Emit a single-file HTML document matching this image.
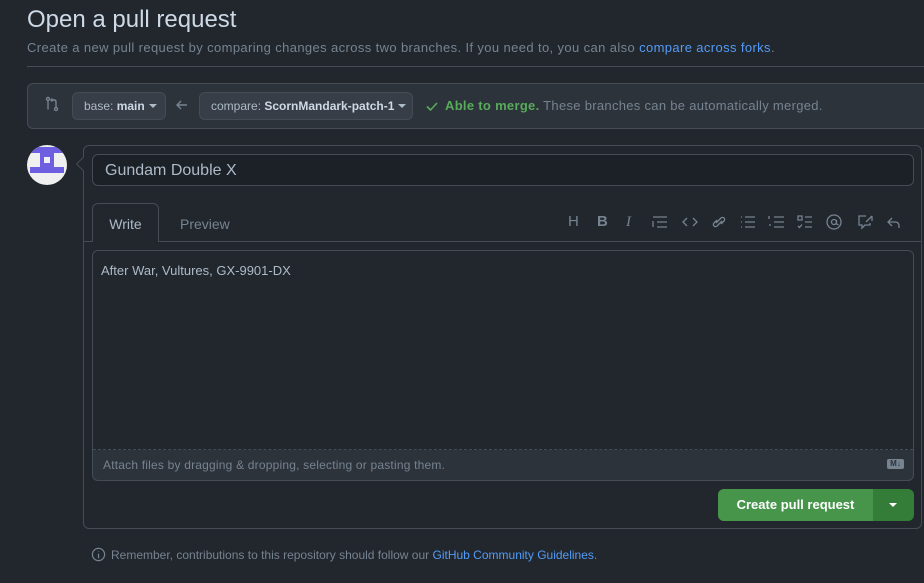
<!DOCTYPE html>
<html><head><style>
*{box-sizing:border-box;margin:0;padding:0}
body{width:924px;height:583px;overflow:hidden;background:#22272e;font-family:"Liberation Sans",sans-serif;color:#adbac7;position:relative}
.a{position:absolute}
.btn{position:absolute;border:1px solid #444c56;background:#373e47;border-radius:6px;font-size:12px;color:#adbac7;display:flex;align-items:center;padding-left:11px}
.btn b{color:#cdd9e5}
.caret{display:inline-block;width:0;height:0;border-left:4px solid transparent;border-right:4px solid transparent;border-top:4px solid #adbac7;margin-left:4px}
svg{position:absolute}
</style></head><body>
<div class="a" style="left:27px;top:6px;font-size:24px;color:#cdd9e5">Open a pull request</div>
<div class="a" style="left:27px;top:40px;font-size:13px;color:#768390;letter-spacing:0.38px">Create a new pull request by comparing changes across two branches. If you need to, you can also <span style="color:#539bf5">compare across forks</span>.</div>
<div class="a" style="left:27px;top:66px;width:897px;height:1px;background:#444c56"></div>
<div class="a" style="left:27px;top:83px;width:910px;height:46px;background:#2d333b;border:1px solid #444c56;border-radius:6px"></div>
<svg style="left:44px;top:96px" width="16" height="16" viewBox="0 0 16 16" fill="none" stroke="#768390" stroke-width="1.4"><circle cx="4" cy="3" r="1.5"/><path d="M4 4.5v9"/><circle cx="12" cy="13" r="1.5"/><path d="M12 11.5V6q0-2-2-2H7M8.5 2.5 7 4l1.5 1.5"/></svg>
<div class="btn" style="left:72px;top:92px;width:94px;height:28px">base:&nbsp;<b>main</b><span class="caret"></span></div>
<svg style="left:175px;top:98px" width="14" height="14" viewBox="0 0 14 14" fill="none" stroke="#768390" stroke-width="1.4"><path d="M12 7H2M6 3 2 7l4 4"/></svg>
<div class="btn" style="left:199px;top:92px;width:214px;height:28px">compare:&nbsp;<b>ScornMandark-patch-1</b><span class="caret"></span></div>
<svg style="left:425px;top:99px" width="14" height="14" viewBox="0 0 14 14" fill="none" stroke="#57ab5a" stroke-width="1.6"><path d="M2 7.5 5.5 11 12 4"/></svg>
<div class="a" style="left:445px;top:98px;font-size:13px;color:#768390;letter-spacing:0.3px"><b style="color:#57ab5a">Able to merge.</b> These branches can be automatically merged.</div>
<div class="a" style="left:27px;top:145px;width:40px;height:40px;border-radius:50%;background:#f0f0f0;overflow:hidden">
<div class="a" style="left:3px;top:2px;width:34px;height:6px;background:#6e5ee0"></div>
<div class="a" style="left:13px;top:8px;width:14px;height:14px;background:#6e5ee0"></div>
<div class="a" style="left:17px;top:12px;width:6px;height:6px;background:#f0f0f0"></div>
<div class="a" style="left:3px;top:22px;width:34px;height:6px;background:#6e5ee0"></div>
</div>
<div class="a" style="left:83px;top:145px;width:839px;height:384px;border:1px solid #444c56;border-radius:6px"></div>
<div class="a" style="left:78px;top:159px;width:10px;height:10px;background:#22272e;border-left:1px solid #444c56;border-bottom:1px solid #444c56;transform:rotate(45deg)"></div>
<div class="a" style="left:92px;top:154px;width:822px;height:32px;background:#1c2128;border:1px solid #444c56;border-radius:6px;font-size:16px;color:#adbac7;padding:7px 12px">Gundam Double X</div>
<div class="a" style="left:84px;top:241px;width:837px;height:1px;background:#444c56"></div>
<div class="a" style="left:92px;top:203px;width:67px;height:39px;border:1px solid #444c56;border-bottom:none;border-radius:6px 6px 0 0;background:#22272e;font-size:14px;color:#adbac7;text-align:center;padding-top:12px">Write</div>
<div class="a" style="left:180px;top:216px;font-size:14px;color:#768390">Preview</div>
<div class="a" style="left:566px;top:214px;font-size:15px;color:#768390;line-height:16px">
<span class="a" style="left:2px">H</span><span class="a" style="left:31px;font-weight:bold">B</span><span class="a" style="left:60px;font-style:italic;font-family:'Liberation Serif'">I</span></div>
<svg style="left:652px;top:214px" width="270" height="16" viewBox="0 0 270 16" fill="none" stroke="#768390" stroke-width="1.3">
<path d="M1 3h14M5 8h10M5 13h10M1 7v6"/>
<path d="M35 4 31 8l4 4M41 4l4 4-4 4"/>
<path d="M64 9l5-5a2 2 0 0 1 3 3l-3 3M70 7l-5 5a2 2 0 0 1-3-3l3-3"/>
<path d="M89 3h1M89 8h1M89 13h1M93 3h10M93 8h10M93 13h10"/>
<path d="M122 3h10M122 8h10M122 13h10M117 2v3M117 11h2"/>
<path d="M146 2h4v4h-4zM153 3h7M153 8h7M153 13h7M146 12l1.5 1.5 2.5-3"/>
<circle cx="182" cy="8" r="7"/><circle cx="182" cy="8" r="2.5"/><path d="M184.5 6v3q0 2 2 1.5"/>
<path d="M208 2h6M220 2l-6 6M220 2v5M212 2h-5v9h3v3l3-3h5V9"/>
<path d="M240 4l-4 4 4 4M236 8h7q4 0 4 4v2"/>
</svg>
<div class="a" style="left:92px;top:250px;width:822px;height:231px;border:1px solid #444c56;border-radius:6px;background:#2d333b;overflow:hidden">
<div style="height:199px;background:#22272e;border-bottom:1px dashed #444c56;padding:12px 8px;font-size:13px;color:#adbac7">After War, Vultures, GX-9901-DX</div>
<div style="font-size:12px;color:#768390;padding:8px 10px;letter-spacing:0.2px">Attach files by dragging &amp; dropping, selecting or pasting them.</div>
<div class="a" style="left:794px;top:208px;width:17px;height:10px;background:#768390;border-radius:2px;font-size:8px;color:#2d333b;font-weight:bold;text-align:center;line-height:10px">M↓</div>
</div>
<div class="a" style="left:718px;top:489px;width:196px;height:32px;border-radius:6px;background:#347d39;overflow:hidden">
<div style="position:absolute;left:0;top:0;width:155px;height:32px;background:#46954a;color:#fff;font-weight:bold;font-size:13px;text-align:center;line-height:32px">Create pull request</div>
<div style="position:absolute;left:171px;top:14px;border-left:4px solid transparent;border-right:4px solid transparent;border-top:4px solid #fff"></div>
</div>
<svg style="left:91px;top:547px" width="15" height="15" viewBox="0 0 16 16" fill="none" stroke="#768390" stroke-width="1.3"><circle cx="8" cy="8" r="6.5"/><path d="M8 7v5M8 4.5v.5"/></svg>
<div class="a" style="left:111px;top:548px;font-size:12px;color:#768390">Remember, contributions to this repository should follow our <span style="color:#539bf5">GitHub Community Guidelines</span>.</div>
</body></html>
